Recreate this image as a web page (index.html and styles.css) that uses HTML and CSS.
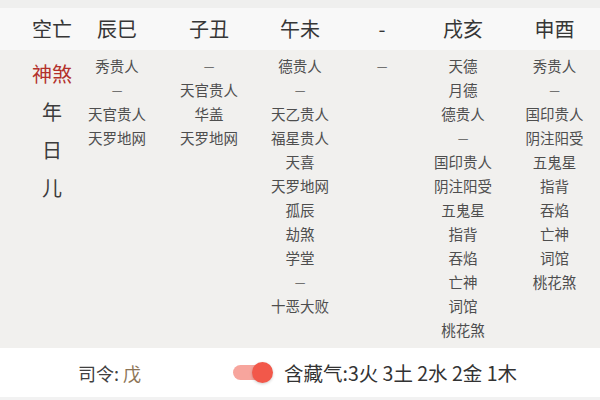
FILE: index.html
```html
<!DOCTYPE html>
<html lang="zh-CN">
<head>
<meta charset="utf-8">
<link rel="stylesheet" href="styles.css">
</head>
<body>
<div class="top"></div>
<div class="grid head">
  <div class="cell">空亡</div>
  <div class="cell">辰巳</div>
  <div class="cell">子丑</div>
  <div class="cell">午未</div>
  <div class="cell">-</div>
  <div class="cell">戌亥</div>
  <div class="cell">申酉</div>
</div>
<div class="grid body">
  <div class="col side">
    <span class="red">神煞</span>
    <span>年</span>
    <span>日</span>
    <span>儿</span>
  </div>
  <div class="col">
    <span>秀贵人</span><span class="dash">—</span><span>天官贵人</span><span>天罗地网</span>
  </div>
  <div class="col">
    <span class="dash">—</span><span>天官贵人</span><span>华盖</span><span>天罗地网</span>
  </div>
  <div class="col">
    <span>德贵人</span><span class="dash">—</span><span>天乙贵人</span><span>福星贵人</span><span>天喜</span><span>天罗地网</span><span>孤辰</span><span>劫煞</span><span>学堂</span><span class="dash">—</span><span>十恶大败</span>
  </div>
  <div class="col">
    <span class="dash">—</span>
  </div>
  <div class="col">
    <span>天德</span><span>月德</span><span>德贵人</span><span class="dash">—</span><span>国印贵人</span><span>阴注阳受</span><span>五鬼星</span><span>指背</span><span>吞焰</span><span>亡神</span><span>词馆</span><span>桃花煞</span>
  </div>
  <div class="col">
    <span>秀贵人</span><span class="dash">—</span><span>国印贵人</span><span>阴注阳受</span><span>五鬼星</span><span>指背</span><span>吞焰</span><span>亡神</span><span>词馆</span><span>桃花煞</span>
  </div>
</div>
<div class="foot">
  <div class="siling">司令: <span class="wu">戊</span></div>
  <div class="toggle"><div class="knob"></div></div>
  <div class="cang">含藏气:3火 3土 2水 2金 1木</div>
</div>
<div class="bottom"></div>
</body>
</html>
```

FILE: styles.css
```css
* { box-sizing: border-box; margin: 0; padding: 0; }
html, body { width: 600px; height: 400px; overflow: hidden; }
body {
  font-family: "Noto Sans CJK SC", "Noto Sans", sans-serif;
  background: #ffffff;
  color: #555;
}
.top { height: 8px; background: #efefee; }
.grid {
  display: grid;
  grid-template-columns: 35px 34px 96px 88px 94px 70px 92px 91px;
}
.head {
  height: 42px;
  background: #f8f8f8;
  align-items: center;
}
.head .cell {
  font-size: 20px;
  color: #363636;
  display: flex;
  justify-content: center;
  white-space: nowrap;
  line-height: 42px;
}
.head .cell:first-child { grid-column: 2; }
.body {
  height: 298px;
  background: #f1f0ee;
  padding-top: 4px;
}
.col {
  display: flex;
  flex-direction: column;
  align-items: center;
  font-size: 14.5px;
  line-height: 24px;
  color: #4e4e4e;
  white-space: nowrap;
}
.col.side { grid-column: 2; padding-top: 1px; font-size: 20px; line-height: 38px; color: #3c3c3c; }
.red { color: #b3302b; }
.dash { color: #555; font-size: 12px; }
.foot {
  height: 49px;
  display: flex;
  align-items: center;
  padding-left: 78px;
}
.siling { font-size: 18px; color: #404040; width: 155px; white-space: nowrap; }
.wu { color: #8c7456; }
.toggle {
  position: relative;
  width: 32px;
  height: 15px;
  border-radius: 8px;
  background: #f7a59d;
  margin-right: 19px;
}
.knob {
  position: absolute;
  left: 19px;
  top: -3px;
  width: 21px;
  height: 21px;
  border-radius: 50%;
  background: #f2584a;
  box-shadow: 0 1px 3px rgba(0,0,0,0.2);
}
.cang { font-size: 19.5px; color: #333; white-space: nowrap; }
.bottom { height: 3px; background: #f2f2f2; }
```
